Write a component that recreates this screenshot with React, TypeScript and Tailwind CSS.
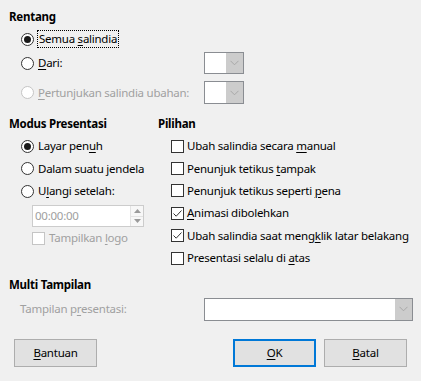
import React from "react";

const FONT = { fontFamily: '"Noto Sans", "Open Sans", sans-serif' };

function U({ children }: { children: React.ReactNode }) {
  return <span className="underline decoration-1 underline-offset-[2px]">{children}</span>;
}

function Radio({ checked, disabled }: { checked?: boolean; disabled?: boolean }) {
  return (
    <span
      className={`w-[13px] h-[13px] rounded-full border flex items-center justify-center shrink-0 bg-white ${
        disabled ? "border-[#c5c5c5]" : "border-[#333333]"
      }`}
    >
      {checked && <span className="w-[7px] h-[7px] rounded-full bg-[#1a1a1a]" />}
    </span>
  );
}

function Check({ checked, disabled }: { checked?: boolean; disabled?: boolean }) {
  return (
    <span
      className={`w-[13px] h-[13px] border flex items-center justify-center shrink-0 bg-white ${
        disabled ? "border-[#c5c5c5]" : "border-[#333333]"
      }`}
    >
      {checked && (
        <svg width="11" height="11" viewBox="0 0 11 11">
          <path d="M1.5 5.5 L4.2 8.2 L9.5 2.5" fill="none" stroke="#333" strokeWidth="1" />
        </svg>
      )}
    </span>
  );
}

function Chevron() {
  return (
    <svg width="9" height="6" viewBox="0 0 9 6">
      <path d="M0.5 0.8 L4.5 4.8 L8.5 0.8" fill="none" stroke="#a8a8a8" strokeWidth="1" />
    </svg>
  );
}

function Combo({ w, h }: { w: number; h: number }) {
  return (
    <div
      className="border border-[#8a8d92] bg-white flex justify-end shrink-0"
      style={{ width: w, height: h }}
    >
      <div className="w-[17px] h-full bg-[#cccccc] flex items-center justify-center">
        <Chevron />
      </div>
    </div>
  );
}

function Btn({ children, focused }: { children: React.ReactNode; focused?: boolean }) {
  return (
    <div
      className={`w-[83px] h-[28px] bg-[#e1e1e1] flex items-center justify-center text-black ${
        focused ? "border-2 border-[#0078d7]" : "border border-[#adadad]"
      }`}
    >
      {children}
    </div>
  );
}

export default function App() {
  const checks: [React.ReactNode, boolean][] = [
    [<>Ubah salindia secara <U>m</U>anual</>, false],
    [<>Penunjuk tetikus <U>t</U>ampak</>, false],
    [<>Penunjuk tetikus seperti <U>p</U>ena</>, false],
    [<><U>A</U>nimasi dibolehkan</>, true],
    [<>Ubah salindia saat meng<U>k</U>lik latar belakang</>, true],
    [<>Presentasi selalu di <U>a</U>tas</>, false],
  ];
  return (
    <div
      className="w-[421px] h-[381px] bg-[#f0f0f0] pt-[9px] pl-[9px] text-[11.5px] tracking-[-0.25px] leading-[16px] text-black flex flex-col overflow-hidden whitespace-nowrap"
      style={FONT}
    >
      {/* Rentang */}
      <div className="h-[16px] font-bold">Rentang</div>
      <div className="mt-[4px] pl-[12px] flex flex-col">
        <div className="h-[20px] flex items-center">
          <Radio checked />
          <span className="ml-[3px] border border-dotted border-black px-[1px] leading-[16px]">
            Semua <U>s</U>alindia
          </span>
        </div>
        <div className="mt-[3px] h-[22px] w-[223px] flex items-center justify-between">
          <div className="flex items-center">
            <Radio />
            <span className="ml-[4px]">
              <U>D</U>ari:
            </span>
          </div>
          <Combo w={40} h={22} />
        </div>
        <div className="mt-[7px] h-[23px] w-[223px] flex items-center justify-between">
          <div className="flex items-center text-[#a0a0a0]">
            <Radio disabled />
            <span className="ml-[4px]">
              <U>P</U>ertunjukan salindia ubahan:
            </span>
          </div>
          <Combo w={40} h={23} />
        </div>
      </div>

      {/* Columns */}
      <div className="mt-[12px] h-[161px] flex">
        <div className="w-[149px] shrink-0 flex flex-col">
          <div className="h-[16px] font-bold">Modus Presentasi</div>
          <div className="mt-[3px] pl-[12px] flex flex-col">
            <div className="h-[22.5px] flex items-center">
              <Radio checked />
              <span className="ml-[4px]">
                Layar pen<U>u</U>h
              </span>
            </div>
            <div className="h-[22.5px] flex items-center">
              <Radio />
              <span className="ml-[4px]">
                Dalam suatu <U>j</U>endela
              </span>
            </div>
            <div className="h-[22.5px] flex items-center">
              <Radio />
              <span className="ml-[4px]">
                U<U>l</U>angi setelah:
              </span>
            </div>
          </div>
          <div className="mt-[2.5px] ml-[23px] w-[112px] h-[22px] border border-[#cccccc] bg-white flex">
            <div className="flex-1 flex items-center pl-[2px] text-[#a0a0a0]">00:00:00</div>
            <div className="w-[13px] h-full flex flex-col border-l border-[#e3e3e3]">
              <div className="flex-1 flex items-center justify-center border-b border-[#e3e3e3] bg-[#f7f7f7]">
                <svg width="7" height="4" viewBox="0 0 7 4">
                  <path d="M0 4 L3.5 0 L7 4 Z" fill="#9a9a9a" />
                </svg>
              </div>
              <div className="flex-1 flex items-center justify-center bg-[#f7f7f7]">
                <svg width="7" height="4" viewBox="0 0 7 4">
                  <path d="M0 0 L3.5 4 L7 0 Z" fill="#9a9a9a" />
                </svg>
              </div>
            </div>
          </div>
          <div className="h-[22px] pl-[23px] flex items-center text-[#a0a0a0]">
            <Check disabled />
            <span className="ml-[4px]">
              Tampilkan <U>l</U>ogo
            </span>
          </div>
        </div>
        <div className="flex flex-col">
          <div className="h-[16px] font-bold">Pilihan</div>
          <div className="mt-[3px] pl-[13px] flex flex-col">
            {checks.map(([label, c], i) => (
              <div key={i} className="h-[22.4px] flex items-center">
                <Check checked={c} />
                <span className="ml-[3px]">{label}</span>
              </div>
            ))}
          </div>
        </div>
      </div>

      {/* Multi Tampilan */}
      <div className="h-[16px] font-bold">Multi Tampilan</div>
      <div className="mt-[5px] h-[22px] flex items-center">
        <span className="ml-[11px] w-[184px] text-[#a0a0a0]">
          Tampilan p<U>r</U>esentasi:
        </span>
        <Combo w={209} h={23} />
      </div>

      {/* Buttons */}
      <div className="mt-[19px] pl-[5px] flex">
        <Btn>
          <U>B</U>antuan
        </Btn>
        <div className="ml-[136px]">
          <Btn focused>
            <U>O</U>K
          </Btn>
        </div>
        <div className="ml-[8px]">
          <Btn>
            <U>B</U>atal
          </Btn>
        </div>
      </div>
    </div>
  );
}
